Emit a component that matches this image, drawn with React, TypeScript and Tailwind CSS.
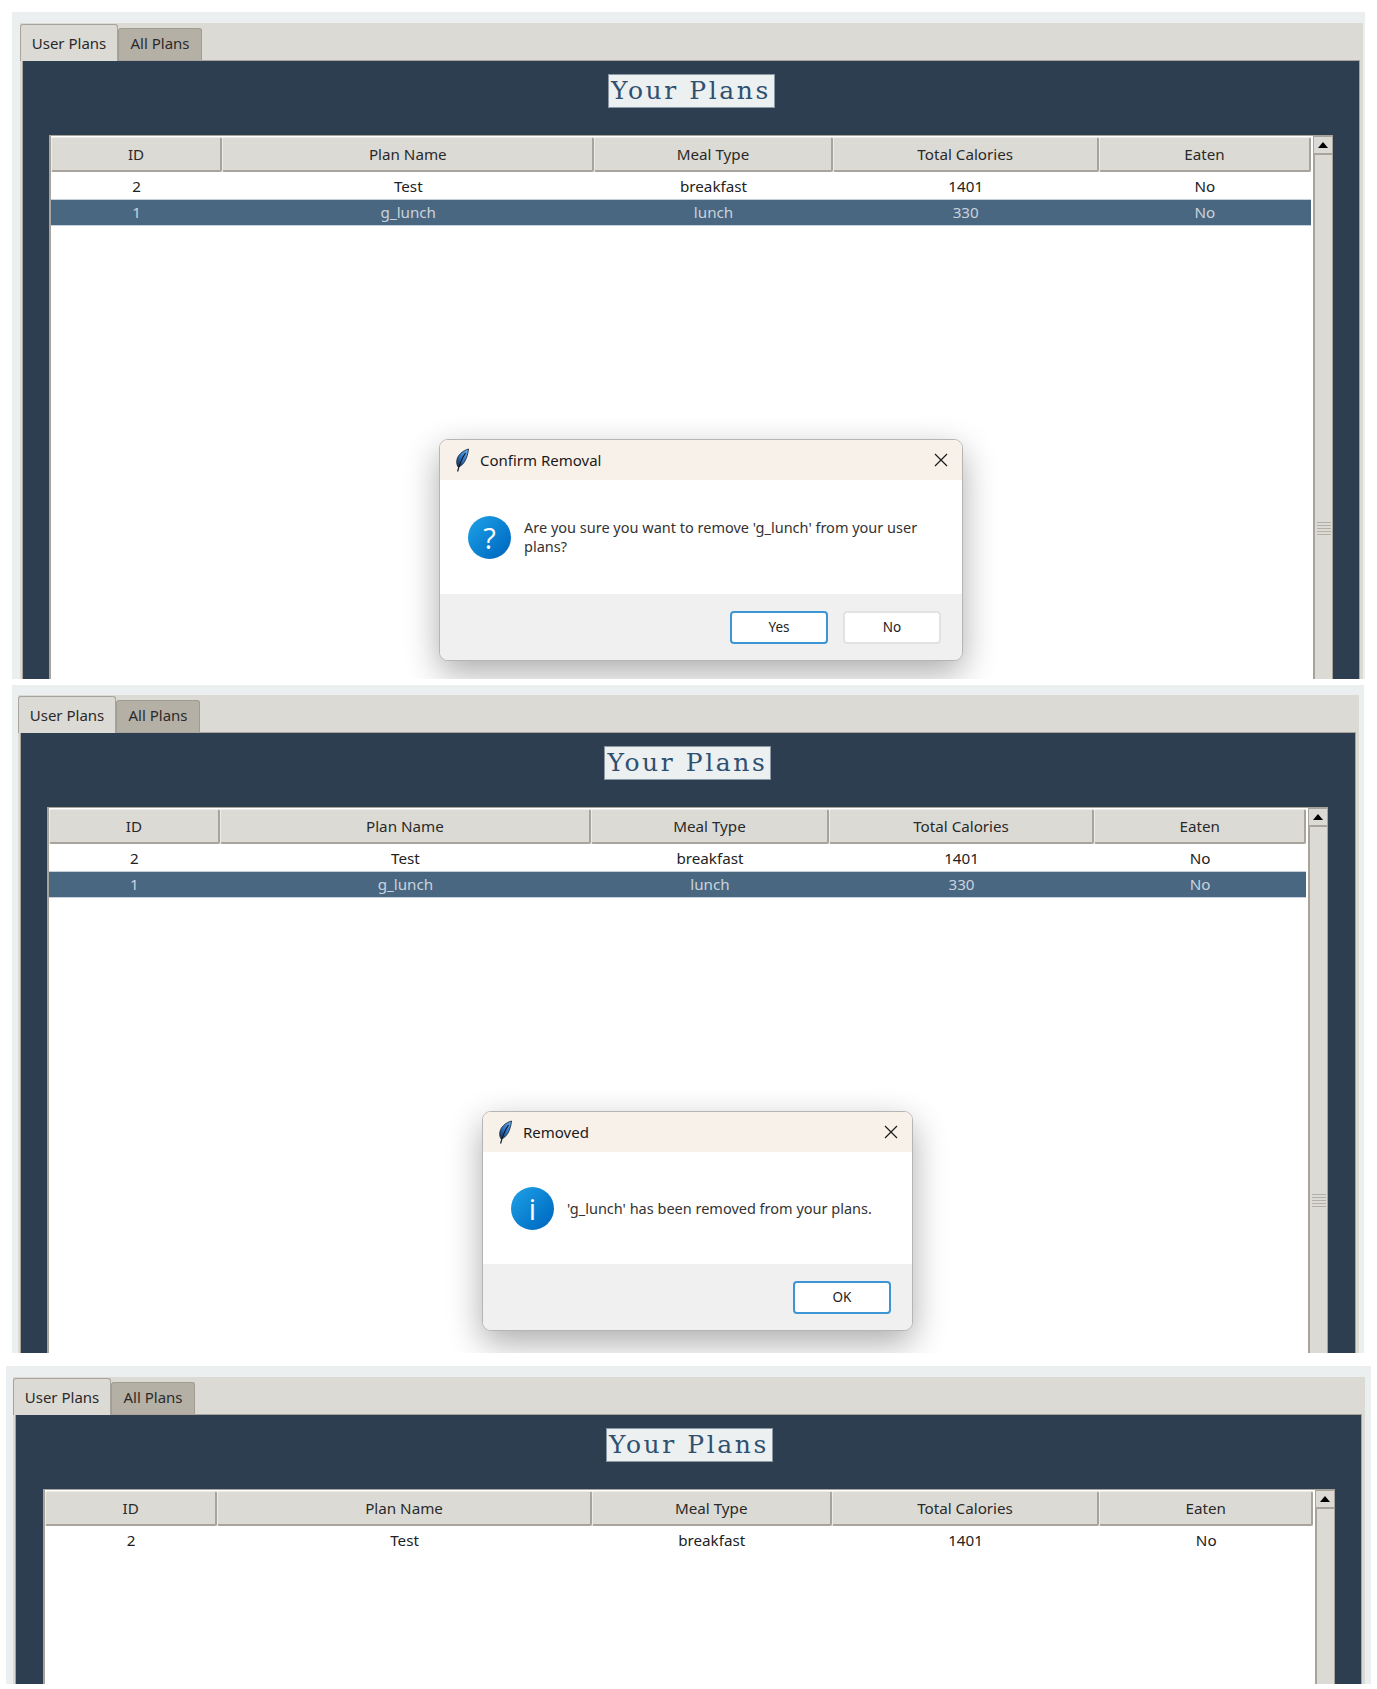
import React from "react";

const ui = "font-['Noto_Sans','Open_Sans',sans-serif]";
const grid = "grid grid-cols-[171fr_372fr_238fr_266fr_212fr]";
const headers = ["ID", "Plan Name", "Meal Type", "Total Calories", "Eaten"];

function Feather() {
  return (
    <svg width="17" height="25" viewBox="0 0 17 25" className="shrink-0">
      <defs>
        <linearGradient id="fq" x1="1" y1="0" x2="0" y2="1">
          <stop offset="0" stopColor="#6fb2ee" />
          <stop offset="0.55" stopColor="#2f74c4" />
          <stop offset="1" stopColor="#16263f" />
        </linearGradient>
      </defs>
      <path
        d="M14.5 1 C9 2.5 3.5 7 2.8 12.5 C2.5 15.5 3.2 17.8 4.2 19 C9.5 17.5 13.5 10.5 14.5 1 Z"
        fill="url(#fq)"
        stroke="#1d2b40"
        strokeWidth="0.9"
      />
      <path d="M11.5 5 C8 10 5.5 16 3.6 23.5" stroke="#111a28" strokeWidth="1.2" fill="none" />
    </svg>
  );
}

function Row({ cells, selected }: { cells: string[]; selected?: boolean }) {
  return (
    <div
      className={`${grid} h-[27px] items-center text-center text-[15.2px] ${
        selected ? "bg-[#4a6782] text-[#c9d3dc] border-y border-[#c5d0da]" : "text-[#222222] pt-px"
      }`}
    >
      {cells.map((c, i) => (
        <div key={i}>{c}</div>
      ))}
    </div>
  );
}

function Scrollbar() {
  return (
    <div className="w-[20px] shrink-0 h-full flex flex-col bg-[#dcdad5]">
      <div className="h-[19px] shrink-0 flex items-center justify-center border border-[#a8a49b] border-b-2">
        <div className="w-0 h-0 border-x-[5px] border-x-transparent border-b-[6px] border-b-black" />
      </div>
      <div className="flex-1 border-l-2 border-r border-[#a8a49b] flex flex-col items-center pt-[367px]">
        <div className="w-[14px] h-[13px] flex flex-col justify-between">
          {[0, 1, 2, 3, 4].map((i) => (
            <div key={i} className="h-px bg-[#b3b0a8]" />
          ))}
        </div>
      </div>
    </div>
  );
}

function Panel({
  outer,
  dark,
  rows,
  children,
}: {
  outer: string;
  dark: string;
  rows: { cells: string[]; selected?: boolean }[];
  children?: React.ReactNode;
}) {
  return (
    <div className={`relative overflow-hidden bg-[#ebeff0] ${outer}`}>
      <div className="flex flex-col h-full bg-[#dcdad5]">
        <div className="flex h-[37px] shrink-0 items-end text-[15px] text-[#2a2a2a]">
          <div className="w-[98px] h-[37px] -mb-px z-10 pt-px flex items-center justify-center bg-[#dcdad5] border border-b-0 border-[#a8a49b] rounded-t-[3px]">
            User Plans
          </div>
          <div className="w-[84px] h-[32px] pb-[2px] flex items-center justify-center bg-[#b5b0a5] border border-b-0 border-[#a09c92] rounded-t-[3px]">
            All Plans
          </div>
        </div>
        <div className={`flex-1 flex flex-col bg-[#2c3e50] border-[#a8a49b] border-x border-t ml-[2px] mr-[3px] ${dark}`}>
          <div className="flex justify-center pt-[13px] h-[74px] shrink-0">
            <div className="w-[167px] h-[34px] bg-[#ecf0f1] text-[#2f5070] border border-[#8a98a6] flex items-center justify-center font-['DejaVu_Serif',serif] text-[25px] tracking-[2.6px] whitespace-pre">
              Your Plans
            </div>
          </div>
          <div className="flex-1 flex items-start min-h-0">
            <div className="flex-1 h-full flex bg-[#a8a49b] border-t border-[#a8a49b]">
              <div className="flex-1 h-full bg-white border-l-2 border-[#a8a49b] pt-px">
                <div className={`${grid} h-[35px] text-center text-[15.2px] text-[#2a2a2a]`}>
                  {headers.map((h, i) => (
                    <div
                      key={i}
                      className="flex items-center justify-center bg-[#dcdad5] border-r-2 border-b-2 border-[#a8a49b] border-l border-t border-l-[#ecebe7] border-t-[#ecebe7] rounded-[2px]"
                    >
                      {h}
                    </div>
                  ))}
                </div>
                <div>
                  {rows.map((r, i) => (
                    <Row key={i} cells={r.cells} selected={r.selected} />
                  ))}
                </div>
              </div>
              <div className="w-[2px] shrink-0 bg-white" />
              <Scrollbar />
            </div>
          </div>
        </div>
      </div>
      {children}
    </div>
  );
}

function Dialog({
  title,
  pos,
  icon,
  children,
  buttons,
}: {
  title: string;
  pos: string;
  icon: string;
  children: React.ReactNode;
  buttons: { label: string; primary?: boolean }[];
}) {
  return (
    <div
      className={`absolute ${pos} flex flex-col rounded-[9px] overflow-hidden border border-[#b5b5b5] bg-white shadow-[0_12px_34px_rgba(0,0,0,0.33)] ${ui}`}
    >
      <div className="h-[40px] shrink-0 flex items-center bg-[#f8f1ea] pl-[14px] pr-[14px] text-[15px] text-[#1a1a1a]">
        <Feather />
        <span className="ml-[9px] flex-1">{title}</span>
        <svg width="14" height="14" viewBox="0 0 14 14" className="shrink-0">
          <path d="M1 1 L13 13 M13 1 L1 13" stroke="#1a1a1a" strokeWidth="1.2" fill="none" />
        </svg>
      </div>
      <div className="flex-1 flex items-center pl-[28px] pr-[14px] gap-[13px]">
        <div className="w-[43px] h-[43px] shrink-0 rounded-full bg-gradient-to-br from-[#1fa3e8] to-[#0063bd] flex items-center justify-center text-white font-['Open_Sans',sans-serif] font-medium text-[29px] leading-none">
          {icon}
        </div>
        <div className="text-[14.5px] leading-[19px] text-[#333333]">{children}</div>
      </div>
      <div className="h-[66px] shrink-0 bg-[#f0f0f0] flex items-center justify-end pr-[21px] gap-[15px]">
        {buttons.map((b) => (
          <div
            key={b.label}
            className={`w-[98px] h-[33px] flex items-center justify-center bg-white rounded-[4px] text-[13.5px] text-[#222222] ${
              b.primary ? "border-2 border-[#3d95d6]" : "border-2 border-[#e2e2e2]"
            }`}
          >
            {b.label}
          </div>
        ))}
      </div>
    </div>
  );
}

const r2 = { cells: ["2", "Test", "breakfast", "1401", "No"] };
const r1 = { cells: ["1", "g_lunch", "lunch", "330", "No"], selected: true };

export default function App() {
  return (
    <div className={`w-[1377px] h-[1689px] bg-white ${ui} flex flex-col`}>
      <div className="h-[12px] shrink-0" />
      <Panel
        outer="ml-[12px] mr-[12px] h-[667px] shrink-0 pt-[11px] pl-[8px] pr-[2px]"
        dark="pl-[26px] pr-[26px]"
        rows={[r2, r1]}
      >
        <Dialog
          title="Confirm Removal"
          pos="left-[427px] top-[427px] w-[524px] h-[222px]"
          icon="?"
          buttons={[{ label: "Yes", primary: true }, { label: "No" }]}
        >
          Are you sure you want to remove 'g_lunch' from your user
          <br />
          plans?
        </Dialog>
      </Panel>
      <div className="h-[6px] shrink-0" />
      <Panel
        outer="ml-[12px] mr-[13px] h-[668px] shrink-0 pt-[10px] pl-[6px] pr-[5px]"
        dark="pl-[26px] pr-[27px]"
        rows={[r2, r1]}
      >
        <Dialog
          title="Removed"
          pos="left-[470px] top-[426px] w-[431px] h-[220px]"
          icon="i"
          buttons={[{ label: "OK", primary: true }]}
        >
          'g_lunch' has been removed from your plans.
        </Dialog>
      </Panel>
      <div className="h-[13px] shrink-0" />
      <Panel
        outer="ml-[6px] mr-[6px] h-[318px] shrink-0 pt-[11px] pl-[7px] pr-[6px]"
        dark="pl-[27px] pr-[26px]"
        rows={[r2]}
      />
    </div>
  );
}
